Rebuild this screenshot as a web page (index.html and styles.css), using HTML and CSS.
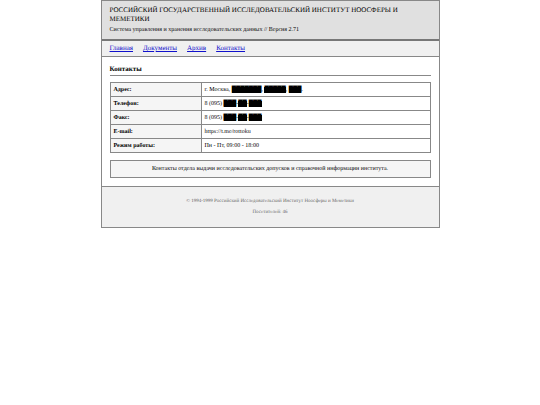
FILE: index.html
```html
<!DOCTYPE html>
<html lang="ru">
<head>
<meta charset="utf-8">
<title>Контакты</title>
<link rel="stylesheet" href="styles.css">
</head>
<body>
<div class="page">
  <header class="header">
    <h1 class="title">РОССИЙСКИЙ ГОСУДАРСТВЕННЫЙ ИССЛЕДОВАТЕЛЬСКИЙ ИНСТИТУТ НООСФЕРЫ И МЕМЕТИКИ</h1>
    <p class="subtitle">Система управления и хранения исследовательских данных // Версия 2.71</p>
  </header>
  <nav class="nav">
    <a href="#">Главная</a>
    <a href="#">Документы</a>
    <a href="#">Архив</a>
    <a href="#">Контакты</a>
  </nav>
  <main class="content">
    <h2 class="heading">Контакты</h2>
    <table class="contacts">
      <tbody>
        <tr><th scope="row">Адрес:</th><td>г. Москва, <span class="redacted">███████</span>, <span class="redacted">█████</span>, <span class="redacted">███</span>.</td></tr>
        <tr><th scope="row">Телефон:</th><td>8 (095) <span class="redacted">███</span>-<span class="redacted">██</span>-<span class="redacted">███</span></td></tr>
        <tr><th scope="row">Факс:</th><td>8 (095) <span class="redacted">███</span>-<span class="redacted">██</span>-<span class="redacted">███</span></td></tr>
        <tr><th scope="row">E-mail:</th><td>https://t.me/rottoku</td></tr>
        <tr><th scope="row">Режим работы:</th><td>Пн - Пт, 09:00 - 18:00</td></tr>
      </tbody>
    </table>
    <p class="notice">Контакты отдела выдачи исследовательских допусков и справочной информации института.</p>
  </main>
  <footer class="footer">
    <p>© 1994-1999 Российский Исследовательский Институт Ноосферы и Меметики</p>
    <p>Посетителей: 46</p>
  </footer>
</div>
</body>
</html>
```
FILE: styles.css
```css
* {
  box-sizing: border-box;
}

body {
  margin: 0;
  background: #fff;
  color: #000;
  font-family: "Liberation Serif", "Times New Roman", serif;
  font-size: 6px;
  line-height: 8px;
  text-rendering: geometricPrecision;
}

h1, h2, p {
  margin: 0;
}

.page {
  max-width: 339px;
  margin: 0 auto;
  border: 1px solid #888;
}

.header {
  padding: 5px 8px;
  background: #e0e0e0;
  border-bottom: 2px solid #777;
}

.title {
  font-size: 7px;
  font-weight: normal;
  line-height: 9px;
}

.subtitle {
  margin-top: 2px;
}

.nav {
  display: flex;
  gap: 10px;
  padding: 3px 8px 4px;
  background: #f0f0f0;
  border-bottom: 1px solid #888;
  font-size: 7px;
}

.nav a {
  color: #11c;
}

.content {
  padding: 8px;
}

.heading {
  padding-bottom: 2px;
  border-bottom: 1px solid #888;
  font-size: 7px;
}

.contacts {
  width: 100%;
  margin: 6px 0 7px;
  border-collapse: collapse;
}

.contacts th,
.contacts td {
  height: 14px;
  padding: 2px 3px;
  border: 1px solid #888;
  text-align: left;
}

.contacts th {
  width: 91px;
  background: #f5f5f5;
}

.redacted {
  background: #000;
}

.notice {
  padding: 4px;
  background: #f5f5f5;
  border: 1px solid #888;
  text-align: center;
}

.footer {
  display: grid;
  gap: 3px;
  padding: 11px 8px 10px;
  background: #f0f0f0;
  border-top: 1px solid #888;
  color: #666;
  font-size: 5px;
  text-align: center;
}
```
